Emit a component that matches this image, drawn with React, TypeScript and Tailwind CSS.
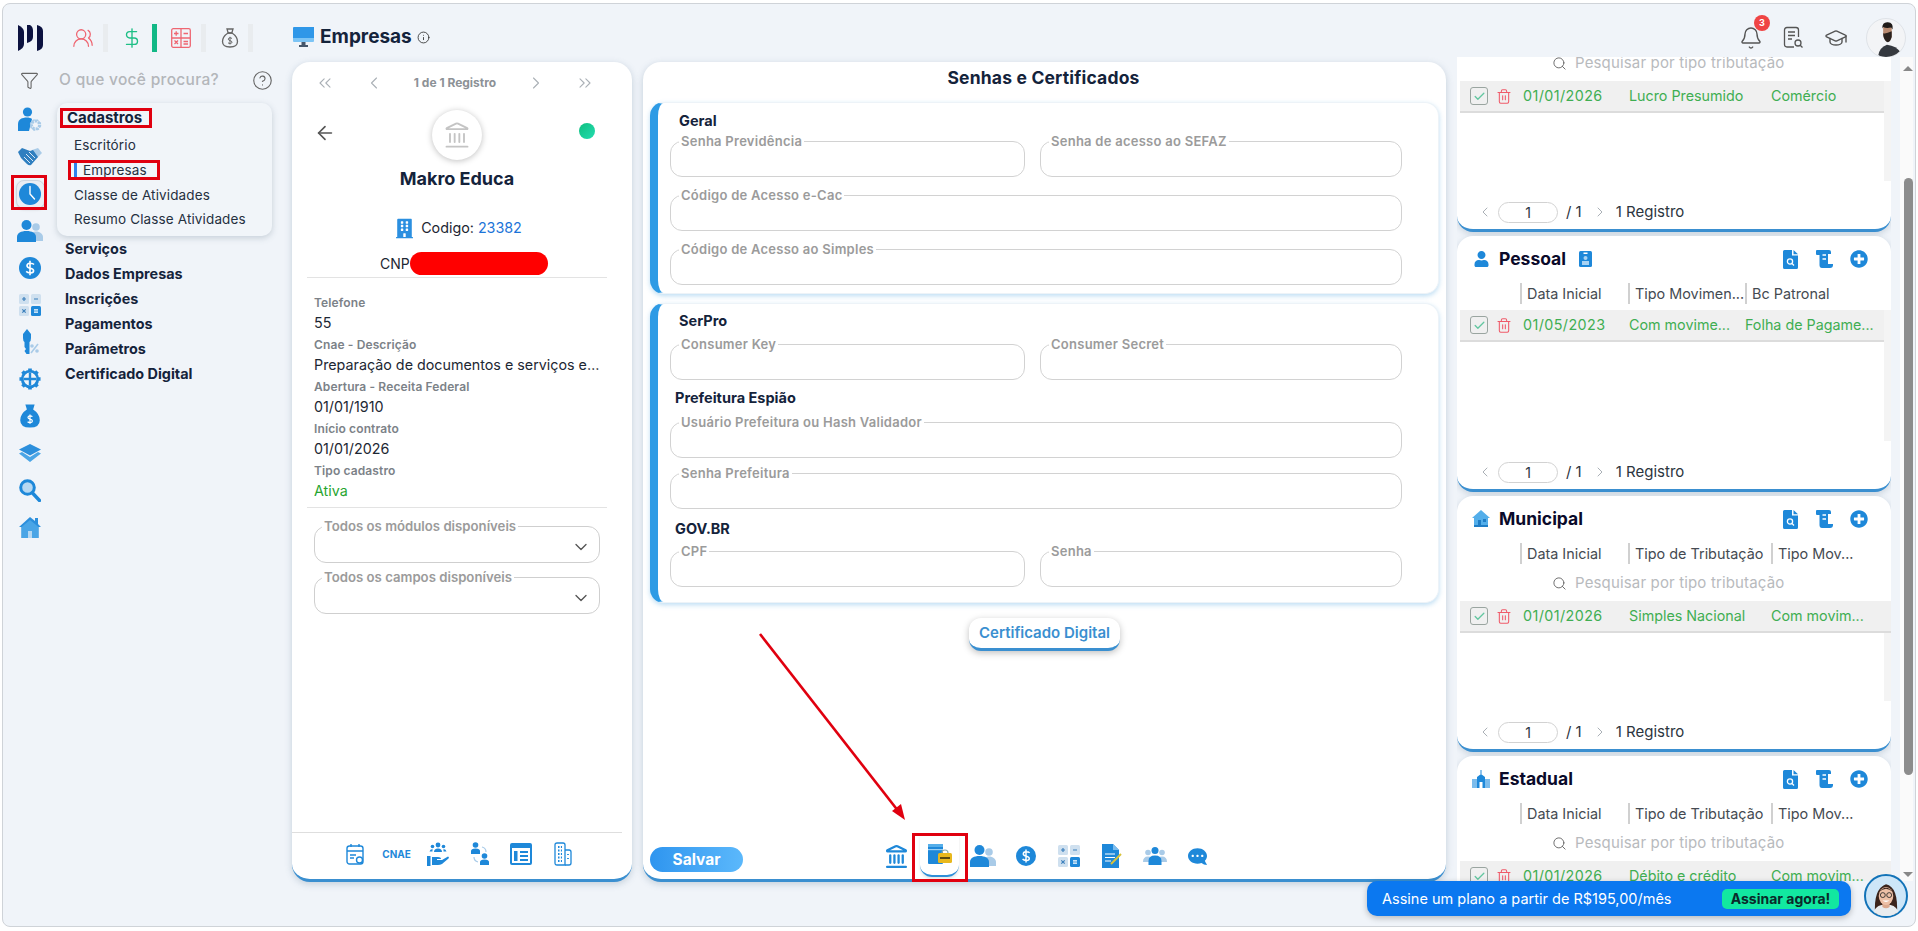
import type { ReactNode } from "react";
import {
  ArrowLeft,
  Bell,
  Check,
  ChevronDown,
  ChevronLeft,
  ChevronRight,
  ChevronsLeft,
  ChevronsRight,
  CircleHelp,
  DollarSign,
  Funnel,
  GraduationCap,
  Info,
  Landmark,
  Search,
  Trash2,
  UsersRound,
} from "lucide-react";
import { FaBuilding, FaCommentDots, FaPlusCircle, FaUniversity, FaUser } from "react-icons/fa";

const BLUE = "#1e88d9";
const LIGHT = "#a9cbe8";

function Logo() {
  return (
    <svg width="25" height="26" viewBox="0 0 25 26" fill="#0c1240">
      <path d="M0 0 C4 2 6 4 6 7 V19 C6 22 4 24 0 26 Z" />
      <path d="M9 0 H12 C14 1 15 3 15 6 V12 C15 15 13 17 9 18 Z" />
      <path d="M19 0 C23 1 25 3 25 6 V20 C25 23 23 25 19 26 Z" />
    </svg>
  );
}

function Monitor() {
  return (
    <svg width="21" height="21" viewBox="0 0 21 21">
      <path d="M0 1 Q0 0 1 0 H21 V11 H0 Z" fill="#2f97e8" />
      <path d="M0 11 H21 V14 Q21 15 20 15 H1 Q0 15 0 14 Z" fill="#7cc4f5" />
      <path d="M8.5 15 H12.5 V18 H15 V20 H6 V18 H8.5 Z" fill="#45566b" />
    </svg>
  );
}

function RedCalc() {
  return (
    <svg width="20" height="20" viewBox="0 0 20 20" fill="none" stroke="#ee6672" strokeWidth="1.3">
      <rect x="0.7" y="0.7" width="18.6" height="18.6" rx="1.5" />
      <path d="M10 1 V19 M1 10 H19 M3 5.5 H7.5 M5.2 3.2 V7.8 M12.5 5.5 H17 M12.5 13.5 H17 M12.5 16 H17 M3.5 12.5 L7 16 M7 12.5 L3.5 16" />
    </svg>
  );
}

function MoneyBag({ color = "#666", size = 20, fill = false }: { color?: string; size?: number; fill?: boolean }) {
  return (
    <svg width={size} height={size} viewBox="0 0 20 20" fill={fill ? color : "none"} stroke={color} strokeWidth="1.3">
      <path d="M7 1 H13 L11.8 5 H8.2 Z" />
      <path d="M8 5 C3.5 8 2.5 11 2.5 13.5 C2.5 17 5.5 19 10 19 C14.5 19 17.5 17 17.5 13.5 C17.5 11 16.5 8 12 5 Z" />
      <path
        d="M12 10.5 C11 9.5 8.3 9.5 8.3 11.2 C8.3 13 12 12.3 12 14.2 C12 15.8 9 15.8 8 14.8 M10 8.8 V16.5"
        stroke={fill ? "#fff" : color}
        fill="none"
        strokeWidth="1"
      />
    </svg>
  );
}

function UserGear() {
  return (
    <svg width="26" height="26" viewBox="0 0 26 26">
      <circle cx="10.5" cy="5" r="4.6" fill={BLUE} />
      <path d="M1 24 V17 C1 12.5 5 10.5 10 10.5 C12 10.5 14 11 15 12 L12 24 Z" fill={BLUE} />
      <circle cx="18.5" cy="18" r="4" fill="none" stroke={LIGHT} strokeWidth="3" strokeDasharray="2.5 1" />
      <circle cx="18.5" cy="18" r="5" fill="none" stroke={LIGHT} strokeWidth="1.5" strokeDasharray="2 2" />
    </svg>
  );
}

function Shake() {
  return (
    <svg width="24" height="18" viewBox="0 0 24 18">
      <path d="M14 2 L20 0 L24 5 L19 10 L14 6 Z" fill={LIGHT} />
      <path d="M0 4 L4 0 L12 3 L15 2 L20 9 L13 17 Q11 18 9 16 L3 10 Z" fill="#2f7fc0" />
      <path d="M8 6 L15 13 M6 9 L12 15 M11 4 L17 10" stroke="#f0f4f9" strokeWidth="0.9" />
    </svg>
  );
}

function Clock() {
  return (
    <svg width="24" height="24" viewBox="0 0 24 24">
      <circle cx="12" cy="12" r="11" fill={BLUE} />
      <path d="M12 4.5 V12 L16.5 17" fill="none" stroke="#fff" strokeWidth="1.4" strokeLinecap="round" />
    </svg>
  );
}

function People() {
  return (
    <svg width="26" height="24" viewBox="0 0 26 24">
      <circle cx="19" cy="8" r="3.8" fill={LIGHT} />
      <path d="M14 22 V17 C14 14 16 12.5 19 12.5 C23 12.5 26 15 26 18 V22 Z" fill={LIGHT} />
      <circle cx="9.5" cy="6" r="5" fill={BLUE} />
      <path d="M0 23 V18 C0 14 4 12 9.5 12 C15 12 19 14 19 18 V23 Z" fill={BLUE} />
    </svg>
  );
}

function DollarCircle({ size = 22 }: { size?: number }) {
  return (
    <svg width={size} height={size} viewBox="0 0 22 22">
      <circle cx="11" cy="11" r="11" fill={BLUE} />
      <path
        d="M15 7.6 C13.5 5.8 8 5.6 8 8.7 C8 12 14.6 10.3 14.6 13.7 C14.6 16.6 9 16.4 7.2 14.4 M11 3.8 V18.2"
        fill="none"
        stroke="#fff"
        strokeWidth="1.6"
      />
    </svg>
  );
}

function CalcTiles() {
  return (
    <svg width="22" height="22" viewBox="0 0 22 22">
      <rect width="10" height="10" rx="1.5" fill="#cfe0ef" />
      <rect x="12" width="10" height="10" rx="1.5" fill="#cfe0ef" />
      <rect y="12" width="10" height="10" rx="1.5" fill="#cfe0ef" />
      <rect x="12" y="12" width="10" height="10" rx="1.5" fill={BLUE} />
      <path
        d="M3 5 H7 M5 3 V7 M15 5 H19 M3.3 15.3 L6.7 18.7 M6.7 15.3 L3.3 18.7"
        stroke="#3b7fbc"
        strokeWidth="1.2"
      />
      <path d="M15 15.8 H19 M15 18.2 H19" stroke="#fff" strokeWidth="1.2" />
    </svg>
  );
}

function KeyPercent() {
  return (
    <svg width="20" height="26" viewBox="0 0 20 26">
      <path d="M7 0 L11 5 V9 Q11 12 9.5 13 V25 L6.5 25 L4.5 22 L6 20 L4.5 18 V13 Q3 12 3 9 V5 Z" fill={BLUE} />
      <path d="M18 15 L11 24" stroke={LIGHT} strokeWidth="1.6" />
      <circle cx="12" cy="17" r="1.8" fill={LIGHT} />
      <circle cx="17" cy="22" r="1.8" fill={LIGHT} />
    </svg>
  );
}

function GearCross() {
  return (
    <svg width="22" height="22" viewBox="0 0 24 24">
      <circle cx="12" cy="12" r="8.5" fill="none" stroke={BLUE} strokeWidth="3" />
      <path d="M12 5 V19 M5 12 H19" stroke={BLUE} strokeWidth="2.6" />
      <path
        d="M12 0.5 V4 M12 20 V23.5 M0.5 12 H4 M20 12 H23.5 M3.8 3.8 L6.3 6.3 M20.2 3.8 L17.7 6.3 M3.8 20.2 L6.3 17.7 M20.2 20.2 L17.7 17.7"
        stroke={BLUE}
        strokeWidth="4"
      />
    </svg>
  );
}

function Layers() {
  return (
    <svg width="22" height="18" viewBox="0 0 22 18">
      <path d="M11 0 L22 5.5 L11 11.5 L0 5.5 Z" fill="#2c8fdc" />
      <path d="M0 9.5 L3 8 L11 13 L19 8 L22 9.5 L11 18 Z" fill="#4aa5e6" />
    </svg>
  );
}

function Magnifier() {
  return (
    <svg width="22" height="23" viewBox="0 0 22 23">
      <circle cx="8.5" cy="8.5" r="6.8" fill="#b6d8f2" stroke={BLUE} strokeWidth="3" />
      <path d="M13.5 14 L20.5 21.5" stroke={BLUE} strokeWidth="3.4" strokeLinecap="round" />
    </svg>
  );
}

function HomeSide() {
  return (
    <svg width="22" height="22" viewBox="0 0 22 22">
      <path d="M11 1 L16 5 V2 H19 V8 L22 11 H19.5 V22 H2.5 V11 H0 Z" fill="#2c8fdc" />
      <path d="M2.5 11 L11 4 L19.5 11 V22 H2.5 Z" fill="#4aa5e6" />
      <rect x="9" y="15" width="4" height="7" fill="#b6d8f2" />
    </svg>
  );
}

function SmallBank() {
  return <Landmark className="h-[25px] w-[25px] text-[#1e88d9]" strokeWidth={2.2} />;
}

function LockDoc() {
  return (
    <svg width="24" height="22" viewBox="0 0 24 22">
      <rect x="0" y="0" width="15" height="20" rx="1" fill={BLUE} />
      <rect x="0" y="0" width="15" height="3" fill="#55aee9" />
      <rect x="0" y="5" width="15" height="1.2" fill="#9cd0f3" />
      <path d="M14 9 Q14 6 17 6 Q20 6 20 9" fill="none" stroke="#8aa" strokeWidth="1.2" />
      <rect x="10" y="9" width="14" height="10" rx="1.5" fill="#e8b81e" />
      <rect x="12" y="13" width="10" height="2" fill="#5a4a10" />
    </svg>
  );
}

function DocPen() {
  return (
    <svg width="20" height="24" viewBox="0 0 20 24">
      <path d="M0 0 H11 L17 6 V24 H0 Z" fill={BLUE} />
      <path d="M11 0 V6 H17 Z" fill="#7cbcec" />
      <path d="M3 10 H13 M3 13.5 H13 M3 17 H9" stroke="#fff" strokeWidth="1.2" />
      <path d="M9 20 L19 10" stroke="#d8c23a" strokeWidth="2" />
    </svg>
  );
}

function Team() {
  return (
    <svg width="24" height="18" viewBox="0 0 24 18">
      <circle cx="5" cy="5.5" r="2.8" fill={LIGHT} />
      <circle cx="19" cy="5.5" r="2.8" fill={LIGHT} />
      <path d="M0 15 Q0 9.5 5 9.5 Q10 9.5 10 15 Z M14 15 Q14 9.5 19 9.5 Q24 9.5 24 15 Z" fill={LIGHT} />
      <circle cx="12" cy="3.6" r="3.5" fill={BLUE} />
      <path d="M5.5 18 V14 Q5.5 8.5 12 8.5 Q18.5 8.5 18.5 14 V18 Z" fill={BLUE} />
    </svg>
  );
}

function FileFind() {
  return (
    <svg width="15" height="19" viewBox="0 0 15 19">
      <path d="M1.5 0 H9 V5.5 H15 V17.5 Q15 19 13.5 19 H1.5 Q0 19 0 17.5 V1.5 Q0 0 1.5 0 Z" fill={BLUE} />
      <path d="M10.5 0 L15 4.2 H10.5 Z" fill={BLUE} />
      <circle cx="7" cy="11.5" r="2.6" fill="none" stroke="#fff" strokeWidth="1.3" />
      <path d="M9 13.5 L11 15.5" stroke="#fff" strokeWidth="1.3" />
    </svg>
  );
}

function ScrollDoc() {
  return (
    <svg width="17" height="18" viewBox="0 0 17 18">
      <path d="M0 1 Q0 0 1 0 H13 Q15 0 15 2 V4 H12 V14 H17 V15 Q17 18 14 18 H6 Q3.5 18 3.5 15 V5 H1 Q0 5 0 4 Z" fill={BLUE} />
      <path d="M6.5 5 H10 M6.5 9 H10" stroke="#fff" strokeWidth="1.4" />
    </svg>
  );
}

function DocGlass() {
  return (
    <svg width="22" height="24" viewBox="0 0 22 24" fill="none" stroke="#555" strokeWidth="1.3">
      <path d="M12 21 H5 Q2.5 21 2.5 18.5 V4 Q2.5 1.5 5 1.5 H14 Q16.5 1.5 16.5 4 V11" />
      <path d="M6 6 H13 M6 9.5 H13 M6 13 H10" />
      <circle cx="16" cy="17" r="3" />
      <path d="M18.2 19.2 L20.5 21.5" />
    </svg>
  );
}

function SmallIcon({ kind }: { kind: string }) {
  if (kind === "calendar") {
    return (
      <svg width="18" height="22" viewBox="0 0 18 22" fill="none" stroke={BLUE} strokeWidth="1.4">
        <rect x="1" y="3" width="16" height="18" rx="2.5" />
        <path d="M1 8 H17 M5 1 V4 M13 1 V4 M4 12 H10 M4 15 H8" />
        <circle cx="13.5" cy="17" r="3" fill="#fff" />
      </svg>
    );
  }
  if (kind === "hands") {
    return (
      <svg width="22" height="24" viewBox="0 0 22 24" fill={BLUE}>
        <circle cx="11" cy="3" r="2.4" />
        <circle cx="5.5" cy="4.5" r="1.8" />
        <circle cx="16.5" cy="4.5" r="1.8" />
        <path d="M7 10 Q7 6.5 11 6.5 Q15 6.5 15 10 Z M2.5 9.5 Q3 7 5.5 7 L5.5 9.5 Z M19.5 9.5 Q19 7 16.5 7 L16.5 9.5 Z" />
        <path d="M0 14 H3.5 V24 H0 Z M5 15 H11 Q14 15 14 17 H10 V18 H15 L21 14.5 Q22.5 15 21.5 16.5 L15 22 Q13 23 11 23 H5 Z" />
      </svg>
    );
  }
  if (kind === "swap") {
    return (
      <svg width="18" height="24" viewBox="0 0 18 24" fill={BLUE}>
        <circle cx="4.5" cy="3" r="2.8" />
        <path d="M0 12 V9 Q0 6.5 4.5 6.5 Q9 6.5 9 9 V12 Z" />
        <circle cx="13.5" cy="14" r="2.8" />
        <path d="M9 23 V20 Q9 17.5 13.5 17.5 Q18 17.5 18 20 V23 Z" />
        <path d="M11 5 Q15 6 15 10 M3 15 Q3 19 7 20" fill="none" stroke={LIGHT} strokeWidth="1.2" />
      </svg>
    );
  }
  if (kind === "news") {
    return (
      <svg width="22" height="22" viewBox="0 0 22 22" fill={BLUE}>
        <path d="M2 0 H20 Q22 0 22 2 V20 Q22 22 20 22 H2 Q0 22 0 20 V2 Q0 0 2 0 Z M2 5 V20 H20 V5 Z" />
        <path d="M4 8 H7.5 V18 H4 Z M10 8 H18 V10 H10 Z M10 12 H18 V14 H10 Z M10 16 H18 V18 H10 Z" />
      </svg>
    );
  }
  return (
    <svg width="18" height="24" viewBox="0 0 18 24" fill="none" stroke={BLUE} strokeWidth="1.3">
      <path d="M1 3 Q1 1 3 1 H9 Q11 1 11 3 V23 H3 Q1 23 1 21 Z" />
      <path d="M11 8 H15 Q17 8 17 10 V21 Q17 23 15 23 H11" />
      <path d="M4 5 H8 M4 8.5 H8 M4 12 H8 M4 15.5 H8 M4 19 H8 M14 12 V13 M14 16 V17" strokeWidth="1.8" strokeDasharray="1.5 1.4" />
    </svg>
  );
}

function TownHall() {
  return (
    <svg width="18" height="18" viewBox="0 0 18 18">
      <path d="M0 18 V9 H5 V18 Z M13 18 V9 H18 V18 Z" fill="#7cbcec" />
      <path d="M5 18 V7 L9 4 L13 7 V18 H10.5 V12 H7.5 V18 Z" fill={BLUE} />
      <path d="M8.5 0 H9.5 V4 H8.5 Z" fill={BLUE} />
    </svg>
  );
}

function HouseColor() {
  return (
    <svg width="18" height="18" viewBox="0 0 18 18">
      <path d="M9 0 L18 8 H16 V17 H2 V8 H0 Z" fill="#53aeea" />
      <path d="M2 15 H16 V17 H2 Z" fill="#1f7dc6" />
      <rect x="6" y="10" width="3" height="5" fill="#1f7dc6" />
      <rect x="11" y="9" width="3" height="3" fill="#1f7dc6" />
    </svg>
  );
}

function ManAvatar() {
  return (
    <svg width="40" height="40" viewBox="0 0 40 40" className="rounded-full border border-[#dfe3e8] bg-[#f3f4f6]">
      <path d="M12 38 Q13 30 21 27 Q31 28 36 36 L32 40 H14 Z" fill="#35393f" />
      <path d="M17 9 Q17 5 22 5 Q27 6 26 12 V19 Q24 25 21 23 Q17 21 17 15 Z" fill="#b98a70" />
      <path d="M16 10 Q16 3 22 3.5 Q28 4 27 11 L25.5 9 Q20 10 17 8.5 Z" fill="#1f1a18" />
      <path d="M17 15 Q20 16 26 13 V19 Q24 26 20.5 24 Q17 21.5 17 15 Z" fill="#2a211d" />
    </svg>
  );
}

function WomanAvatar() {
  return (
    <svg width="44" height="44" viewBox="0 0 44 44" className="rounded-full border-2 border-[#1273b8] bg-[#cde6f8]">
      <path d="M10 42 Q8 14 22 9 Q36 12 34 42 Z" fill="#3a241c" />
      <path d="M6 44 Q10 33 17 32 H27 Q34 33 38 44 Z" fill="#e8ecef" />
      <path d="M18 26 H26 V34 Q22 37 18 34 Z" fill="#dba98e" />
      <ellipse cx="22" cy="22" rx="8" ry="10" fill="#edc0a6" />
      <path d="M14 18 Q22 10 30 18 Q26 13 22 13 Q18 13 14 18 Z" fill="#3a241c" />
      <circle cx="18.5" cy="21" r="2.7" fill="none" stroke="#222" strokeWidth="0.9" />
      <circle cx="25.5" cy="21" r="2.7" fill="none" stroke="#222" strokeWidth="0.9" />
      <path d="M18 27 Q22 30 26 27 Z" fill="#fff" />
    </svg>
  );
}

function Sidebar() {
  const icons = [
    <UserGear key="a" />,
    <Shake key="b" />,
    <div key="c" className="flex h-[29px] w-[29px] items-center justify-center rounded-[8px] border border-[#ced6df] bg-[#e9eef4] shadow-sm">
      <Clock />
    </div>,
    <People key="d" />,
    <DollarCircle key="e" />,
    <CalcTiles key="f" />,
    <KeyPercent key="g" />,
    <GearCross key="h" />,
    <MoneyBag key="i" color={BLUE} size={24} fill />,
    <Layers key="j" />,
    <Magnifier key="k" />,
    <HomeSide key="l" />,
  ];
  const below = ["Serviços", "Dados Empresas", "Inscrições", "Pagamentos", "Parâmetros", "Certificado Digital"];
  const items = ["Escritório", "Empresas", "Classe de Atividades", "Resumo Classe Atividades"];

  return (
    <aside className="flex w-[289px] shrink-0 flex-col">
      <div className="flex h-[46px] items-center">
        <div className="flex w-[53px] justify-center">
          <Funnel className="h-[19px] w-[19px] text-[#666]" strokeWidth={1.4} />
        </div>
        <span className="ml-[3px] text-[15.5px] font-medium tracking-[0.02em] text-[#b3b6ba]">O que você procura?</span>
        <CircleHelp className="ml-auto mr-[19px] h-[21px] w-[21px] text-[#666]" strokeWidth={1.3} />
      </div>
      <div className="flex">
        <div className="-mt-[1.5px] flex w-[54px] flex-col items-center">
          {icons.map((icon, i) => (
            <div key={i} className="flex h-[37px] items-center justify-center">
              {icon}
            </div>
          ))}
        </div>
        <div className="flex flex-col">
          <div className="h-[133px] w-[215px] rounded-[10px] bg-[#f1f5f9] pl-[10px] pt-[3px] shadow-[0_2px_6px_rgba(90,110,130,0.28)]">
            <div className="flex h-[25px] items-center text-[15px] font-bold text-[#14233b]">Cadastros</div>
            <div className="mt-[2px] flex flex-col">
              {items.map((item) => (
                <div
                  key={item}
                  className="flex h-[24.7px] items-center whitespace-nowrap pl-[7px] text-[13.5px] tracking-[0.01em] text-[#25303f]"
                >
                  {item === "Empresas" && <span className="mr-[6px] h-[15px] w-[3px] bg-[#2f80ed]" />}
                  {item}
                </div>
              ))}
            </div>
          </div>
          <div className="mt-[0.5px] flex flex-col pl-[8px]">
            {below.map((item) => (
              <div key={item} className="flex h-[25px] items-center text-[14.4px] font-bold text-[#14233b]">
                {item}
              </div>
            ))}
          </div>
        </div>
      </div>
    </aside>
  );
}

function SelectField({ label, className = "" }: { label: string; className?: string }) {
  return (
    <fieldset className={`mx-[22px] h-[44px] w-[286px] rounded-[12px] border border-[#cfcfcf] pl-[7px] ${className}`}>
      <legend className="px-[2px] text-[13.2px] font-semibold leading-[14px] text-[#9b9b9b]">{label}</legend>
      <div className="flex h-[28px] items-center justify-end pr-[8px]">
        <ChevronDown className="h-[20px] w-[20px] text-[#555]" strokeWidth={1.6} />
      </div>
    </fieldset>
  );
}

function InfoField({ label, value, green }: { label: string; value: string; green?: boolean }) {
  return (
    <div className="mb-[5px] pl-[22px]">
      <div className="mb-[3px] h-[14px] text-[12px] font-semibold leading-[14px] tracking-[0.01em] text-[#7c8288]">{label}</div>
      <div className={`h-[20px] w-[286px] truncate text-[14.3px] leading-[20px] ${green ? "text-[#27a52f]" : "text-[#1d2733]"}`}>
        {value}
      </div>
    </div>
  );
}

function CompanyCard() {
  return (
    <section className="h-[820px] w-[340px] shrink-0 rounded-[18px] border-b-[3px] border-[#3a8fd0] bg-white shadow-[0_2px_7px_rgba(80,110,140,0.28)]">
      <div className="flex h-full w-[330px] flex-col">
        <div className="flex h-[42px] items-center justify-between pl-[23px] pr-[27px] text-[#aab0b6]">
          <ChevronsLeft className="h-[20px] w-[20px]" strokeWidth={1.3} />
          <ChevronLeft className="h-[20px] w-[20px]" strokeWidth={1.3} />
          <span className="text-[12px] font-bold text-[#8c9196]">1 de 1 Registro</span>
          <ChevronRight className="h-[20px] w-[20px]" strokeWidth={1.3} />
          <ChevronsRight className="h-[20px] w-[20px]" strokeWidth={1.3} />
        </div>
        <div className="mt-[6px] grid h-[50px] grid-cols-[1fr_50px_1fr] items-center">
          <ArrowLeft className="-mt-[4px] ml-[22px] h-[22px] w-[22px] text-[#555]" strokeWidth={1.8} />
          <div className="flex h-[50px] w-[50px] items-center justify-center rounded-full bg-white shadow-[0_1px_6px_rgba(0,0,0,0.25)]">
            <Landmark className="h-[28px] w-[28px] text-[#c4c4c4]" strokeWidth={1.6} />
          </div>
          <div className="flex justify-end pr-[27px]">
            <span className="-mt-[9px] h-[16px] w-[16px] rounded-full bg-gradient-to-br from-[#0fbf7f] to-[#23dcb0]" />
          </div>
        </div>
        <h2 className="mt-[6px] text-center text-[18px] font-bold leading-[26px] text-[#14233b]">Makro Educa</h2>
        <div className="mt-[26px] flex h-[20px] items-center justify-center pl-[4px] text-[14.3px] text-[#1d2733]">
          <FaBuilding className="mr-[8px] h-[21px] w-[17px] text-[#2b8fe0]" />
          Codigo:&nbsp;<span className="text-[#1c74d8]">23382</span>
        </div>
        <div className="mt-[14px] flex h-[23px] items-center pl-[88px] text-[14px] text-[#1d2733]">
          <span className="w-[30px] overflow-hidden">CNP</span>
          <span className="h-[23px] w-[138px] rounded-full bg-[#ff0000]" />
        </div>
        <div className="mx-[15px] mt-[2px] h-px w-[300px] bg-[#e3e3e3]" />
        <div className="mt-[18px]">
          <InfoField label="Telefone" value="55" />
          <InfoField label="Cnae - Descrição" value="Preparação de documentos e serviços especializados" />
          <InfoField label="Abertura - Receita Federal" value="01/01/1910" />
          <InfoField label="Início contrato" value="01/01/2026" />
          <InfoField label="Tipo cadastro" value="Ativa" green />
        </div>
        <div className="mx-[15px] mt-[1px] h-px w-[300px] bg-[#e3e3e3]" />
        <SelectField label="Todos os módulos disponíveis" className="mt-[11px]" />
        <SelectField label="Todos os campos disponíveis" className="mt-[7px]" />
        <div className="mt-auto flex h-[47px] items-start justify-center border-t border-[#dedede] pl-[4px] pt-[8px]">
          <div className="flex h-[26px] w-[41.6px] items-center justify-center"><SmallIcon kind="calendar" /></div>
          <div className="flex h-[26px] w-[41.6px] items-center justify-center text-[10px] font-bold text-[#1e88d9]">CNAE</div>
          <div className="flex h-[26px] w-[41.6px] items-center justify-center"><SmallIcon kind="hands" /></div>
          <div className="flex h-[26px] w-[41.6px] items-center justify-center"><SmallIcon kind="swap" /></div>
          <div className="flex h-[26px] w-[41.6px] items-center justify-center"><SmallIcon kind="news" /></div>
          <div className="flex h-[26px] w-[41.6px] items-center justify-center"><SmallIcon kind="build" /></div>
        </div>
      </div>
    </section>
  );
}

function Field({ label, className = "" }: { label: string; className?: string }) {
  return (
    <fieldset className={`h-[43px] rounded-[12px] border border-[#d2d2d2] pl-[8px] ${className}`}>
      <legend className="px-[2px] text-[13px] font-semibold leading-[14px] tracking-[0.02em] text-[#9b9b9b]">{label}</legend>
    </fieldset>
  );
}

function SectionCard({ children, className = "" }: { children: ReactNode; className?: string }) {
  return (
    <div className={`rounded-[14px] border border-l-[8px] border-[#edf3f8] border-l-[#2e9be5] bg-white pl-[12px] shadow-[0_2px_5px_rgba(90,170,225,0.4)] ${className}`}>
      {children}
    </div>
  );
}

function PasswordsCard() {
  const tabs = [
    <SmallBank key="a" />,
    <div key="b" className="flex h-[42px] w-[39px] items-center justify-center rounded-b-[12px] border-b-2 border-[#2f8fd8] shadow-[0_2px_3px_rgba(0,0,0,0.1)]">
      <LockDoc />
    </div>,
    <People key="c" />,
    <DollarCircle key="d" size={20} />,
    <CalcTiles key="e" />,
    <DocPen key="f" />,
    <Team key="g" />,
    <FaCommentDots key="h" className="h-[19px] w-[19px] -scale-x-100 text-[#1e88d9]" />,
  ];

  return (
    <section className="ml-[11px] flex h-[820px] w-[803px] shrink-0 flex-col rounded-[18px] border-b-[3px] border-[#3a8fd0] bg-white px-[7px] shadow-[0_2px_7px_rgba(80,110,140,0.28)]">
      <h2 className="mt-[4px] h-[24px] pr-[2px] text-center text-[17.5px] font-bold leading-[24px] tracking-[0.01em] text-[#14233b]">
        Senhas e Certificados
      </h2>
      <div className="mt-[12px] w-[789px]">
        <SectionCard className="h-[192px] pt-[9px]">
          <div className="ml-[9px] h-[18px] text-[14.5px] font-bold leading-[18px] text-[#14233b]">Geral</div>
          <div className="mt-[4px] grid grid-cols-[355px_362px] gap-x-[15px] gap-y-[11px]">
            <Field label="Senha Previdência" />
            <Field label="Senha de acesso ao SEFAZ" />
            <Field label="Código de Acesso e-Cac" className="col-span-2" />
            <Field label="Código de Acesso ao Simples" className="col-span-2" />
          </div>
        </SectionCard>
        <SectionCard className="mt-[9px] h-[300px] pt-[8px]">
          <div className="ml-[9px] h-[18px] text-[14.5px] font-bold leading-[18px] text-[#14233b]">SerPro</div>
          <div className="mt-[7px] grid grid-cols-[355px_362px] gap-x-[15px]">
            <Field label="Consumer Key" />
            <Field label="Consumer Secret" />
          </div>
          <div className="ml-[5px] mt-[9px] h-[18px] text-[14.5px] font-bold leading-[18px] text-[#14233b]">Prefeitura Espião</div>
          <Field label="Usuário Prefeitura ou Hash Validador" className="mt-[8px] w-[732px]" />
          <Field label="Senha Prefeitura" className="mt-[8px] w-[732px]" />
          <div className="ml-[5px] mt-[11px] h-[18px] text-[14.5px] font-bold leading-[18px] text-[#14233b]">GOV.BR</div>
          <div className="mt-[6px] grid grid-cols-[355px_362px] gap-x-[15px]">
            <Field label="CPF" />
            <Field label="Senha" />
          </div>
        </SectionCard>
      </div>
      <button className="mx-auto mt-[15px] flex h-[33px] w-[151px] items-center justify-center rounded-[12px] border-b-[3px] border-[#3a8fd0] bg-white text-[15px] font-semibold text-[#3a8fd0] shadow-[0_2px_7px_rgba(0,0,0,0.25)]">
        Certificado Digital
      </button>
      <div className="mt-auto flex h-[44px] items-start">
        <button className="mt-[12px] h-[25px] w-[93px] rounded-full bg-gradient-to-r from-[#2e95ef] to-[#5bb8fb] text-[15.5px] font-bold text-white">
          Salvar
        </button>
        <div className="ml-[132px] flex">
          {tabs.map((tab, i) => (
            <div key={i} className="flex h-[42px] w-[43px] items-center justify-center">
              {tab}
            </div>
          ))}
        </div>
      </div>
    </section>
  );
}

type Panel = {
  title: string;
  icon: ReactNode;
  badge?: boolean;
  search: boolean;
  wide: boolean;
  w2: number;
  heads: string[];
  row: string[];
};

const panels: Panel[] = [
  {
    title: "",
    icon: <FaUniversity className="text-[#1e88d9]" />,
    search: true,
    wide: false,
    w2: 143,
    heads: ["", "", ""],
    row: ["01/01/2026", "Lucro Presumido", "Comércio"],
  },
  {
    title: "Pessoal",
    icon: <FaUser className="h-[16px] w-[15px] text-[#1e88d9]" />,
    badge: true,
    search: false,
    wide: false,
    w2: 117,
    heads: ["Data Inicial", "Tipo Movimen...", "Bc Patronal"],
    row: ["01/05/2023", "Com movime...", "Folha de Pagame..."],
  },
  {
    title: "Municipal",
    icon: <HouseColor />,
    search: true,
    wide: true,
    w2: 143,
    heads: ["Data Inicial", "Tipo de Tributação", "Tipo Mov..."],
    row: ["01/01/2026", "Simples Nacional", "Com movim..."],
  },
  {
    title: "Estadual",
    icon: <TownHall />,
    search: true,
    wide: true,
    w2: 143,
    heads: ["Data Inicial", "Tipo de Tributação", "Tipo Mov..."],
    row: ["01/01/2026", "Débito e crédito", "Com movim..."],
  },
];

function DataRow({ panel }: { panel: Panel }) {
  return (
    <div
      className="ml-[3px] grid h-[32px] items-center border-b-2 border-[#dcdcdc] bg-[#f0f0f0] text-[14.3px] text-[#3fae52]"
      style={{ gridTemplateColumns: `60px 108px ${panel.w2}px 1fr` }}
    >
      <div className="flex items-center pl-[10px]">
        <span className="flex h-[18px] w-[18px] items-center justify-center rounded-[3px] border border-[#9aa5a0]">
          <Check className="h-[13px] w-[13px] text-[#62c7a0]" strokeWidth={2.4} />
        </span>
        <Trash2 className="ml-[8px] h-[17px] w-[16px] text-[#ef5b6a]" strokeWidth={1.6} />
      </div>
      <span className="pl-[3px] tracking-[0.03em]">{panel.row[0]}</span>
      <span className="pl-[1px] pr-[6px]">{panel.row[1]}</span>
      <span className="whitespace-nowrap">{panel.row[2]}</span>
    </div>
  );
}

function PanelCard({ panel }: { panel: Panel }) {
  return (
    <section className="mb-[4px] flex h-[256px] shrink-0 flex-col rounded-[16px] border-b-[3px] border-[#3a8fd0] bg-white shadow-[0_2px_6px_rgba(80,110,140,0.25)]">
      <div className="flex h-[44px] items-center pt-[2px]">
        <span className="flex w-[42px] justify-center pl-[6px]">{panel.icon}</span>
        <h3 className="text-[17.5px] font-bold text-[#0a0a2a]">{panel.title}</h3>
        {panel.badge && (
          <svg width="13" height="16" viewBox="0 0 13 16" className="ml-[13px]">
            <rect width="13" height="16" rx="1.5" fill={BLUE} />
            <rect x="4.5" y="1.5" width="4" height="1.5" fill="#fff" />
            <circle cx="6.5" cy="7" r="2" fill="#a9d3f3" />
            <rect x="3" y="10" width="7" height="4" fill="#a9d3f3" />
          </svg>
        )}
        <div className="ml-auto flex items-center pr-[23px]">
          <FileFind />
          <span className="ml-[18px]"><ScrollDoc /></span>
          <FaPlusCircle className="ml-[17px] h-[18px] w-[18px] text-[#1e88d9]" />
        </div>
      </div>
      <div
        className="grid h-[26px] items-center whitespace-nowrap text-[14.4px] text-[#454b52]"
        style={{ gridTemplateColumns: `63px 108px ${panel.w2}px 1fr` }}
      >
        <span />
        {panel.heads.map((head, i) => (
          <span key={i} className="h-[21px] border-l-2 border-[#d0d0d0] pl-[5px] leading-[21px]">
            {head}
          </span>
        ))}
      </div>
      <div className="mt-[4px]">
        {panel.search && (
          <div className="mb-[5px] flex h-[26px] items-center pl-[95px] text-[15px] tracking-[0.01em] text-[#b8babd]">
            <Search className="mr-[8px] h-[15px] w-[15px] text-[#666]" strokeWidth={1.5} />
            Pesquisar por tipo tributação
          </div>
        )}
        {panel.wide && <DataRow panel={panel} />}
      </div>
      <div className="flex flex-1">
        <div className="flex-1">{!panel.wide && <DataRow panel={panel} />}</div>
        <div className="w-[7px] bg-[#f4f4f4]" />
      </div>
      <div className="flex h-[48px] shrink-0 items-center pl-[20px] pt-[14px] text-[15px] text-[#2c3540]">
        <ChevronLeft className="h-[16px] w-[16px] text-[#aab0b6]" strokeWidth={1.5} />
        <span className="ml-[5px] flex h-[21px] w-[60px] items-center justify-center rounded-full border border-[#d2d2d2] text-[14px]">1</span>
        <span className="ml-[8px]">/ 1</span>
        <ChevronRight className="ml-[10px] h-[16px] w-[16px] text-[#aab0b6]" strokeWidth={1.5} />
        <span className="ml-[8px]">1 Registro</span>
      </div>
    </section>
  );
}

function Scrollbar() {
  return (
    <div className="ml-[9px] flex w-[13px] flex-col items-center bg-[#fafafa] pl-[3px]">
      <div className="flex h-[22px] items-center">
        <span className="h-0 w-0 border-x-[5px] border-b-[5px] border-x-transparent border-b-[#888]" />
      </div>
      <div className="mt-[99px] h-[597px] w-[9px] rounded-full bg-[#8c8c8c]" />
      <div className="mt-auto flex h-[13px] items-center">
        <span className="h-0 w-0 border-x-[5px] border-t-[5px] border-x-transparent border-t-[#888]" />
      </div>
    </div>
  );
}

function Annotations() {
  const box = "absolute border-[3px] border-[#e0000f]";
  return (
    <>
      <div className={`${box} left-[60px] top-[108px] h-[20px] w-[92px]`} />
      <div className={`${box} left-[68px] top-[160px] h-[20px] w-[92px]`} />
      <div className={`${box} left-[11px] top-[175px] h-[35px] w-[36px]`} />
      <div className={`${box} left-[912px] top-[833px] h-[49px] w-[56px]`} />
      <svg className="absolute left-[750px] top-[625px]" width="170" height="205" viewBox="750 625 170 205">
        <path d="M760 634 L899 812" stroke="#e0000f" strokeWidth="2.6" fill="none" />
        <path d="M905 820 L892 811 L901 804 Z" fill="#e0000f" />
      </svg>
    </>
  );
}

export default function App() {
  return (
    <div className="relative h-[931px] w-[1918px] overflow-hidden bg-white pl-[2px] pt-[3px] font-['Inter','Liberation_Sans',sans-serif]">
      <div className="flex h-[924px] w-[1914px] flex-col overflow-hidden rounded-[8px] border border-[#cfd3d8] bg-[#f0f4f9]">
        <header className="flex h-[53px] shrink-0 items-center pl-[15px] pr-[9px] pt-[14px]">
          <Logo />
          <UsersRound className="ml-[29px] h-[24px] w-[22px] text-[#ee6672]" strokeWidth={1.4} />
          <span className="ml-[9px] h-[28px] w-[5px] bg-[#e9ecef]" />
          <DollarSign className="ml-[13px] h-[24px] w-[22px] text-[#1fbf87]" strokeWidth={1.5} />
          <span className="ml-[9px] h-[28px] w-[5px] bg-[#12b886]" />
          <span className="ml-[14px]"><RedCalc /></span>
          <span className="ml-[10px] h-[28px] w-[5px] bg-[#e9ecef]" />
          <span className="ml-[14px]"><MoneyBag /></span>
          <span className="ml-[8px] h-[28px] w-[5px] bg-[#e9ecef]" />
          <span className="ml-[40px]"><Monitor /></span>
          <h1 className="ml-[6px] text-[19px] font-bold text-[#14233b]">Empresas</h1>
          <Info className="ml-[5px] h-[13px] w-[13px] text-[#333]" strokeWidth={1.6} />
          <div className="ml-auto flex items-center">
            <div className="relative">
              <Bell className="h-[24px] w-[24px] text-[#555]" strokeWidth={1.4} />
              <span className="absolute -right-[7px] -top-[11px] flex h-[16px] w-[16px] items-center justify-center rounded-full bg-[#ef4444] text-[9px] font-bold text-white">
                3
              </span>
            </div>
            <span className="ml-[19px]"><DocGlass /></span>
            <GraduationCap className="ml-[20px] h-[24px] w-[24px] text-[#555]" strokeWidth={1.4} />
            <span className="ml-[18px]"><ManAvatar /></span>
          </div>
        </header>
        <main className="flex h-[824px] shrink-0">
          <Sidebar />
          <div className="flex pt-[5px]">
            <CompanyCard />
            <PasswordsCard />
          </div>
          <div className="ml-[11px] h-[824px] w-[434px] shrink-0 overflow-hidden">
            <div className="-mt-[81px] flex flex-col">
              {panels.map((panel, i) => (
                <PanelCard key={i} panel={panel} />
              ))}
            </div>
          </div>
          <Scrollbar />
        </main>
      </div>
      <div className="absolute left-[1367px] top-[881px] flex h-[35px] w-[484px] items-center rounded-[10px] bg-[#0b78f0] pl-[15px] pr-[12px] text-[14.5px] text-white shadow-[0_2px_6px_rgba(0,0,0,0.25)]">
        Assine um plano a partir de R$195,00/mês
        <span className="ml-auto flex h-[20px] w-[117px] items-center justify-center rounded-[5px] bg-[#12e8a0] text-[14px] font-bold text-[#0a2a2a]">
          Assinar agora!
        </span>
      </div>
      <div className="absolute left-[1864px] top-[874px]">
        <WomanAvatar />
      </div>
      <Annotations />
    </div>
  );
}
